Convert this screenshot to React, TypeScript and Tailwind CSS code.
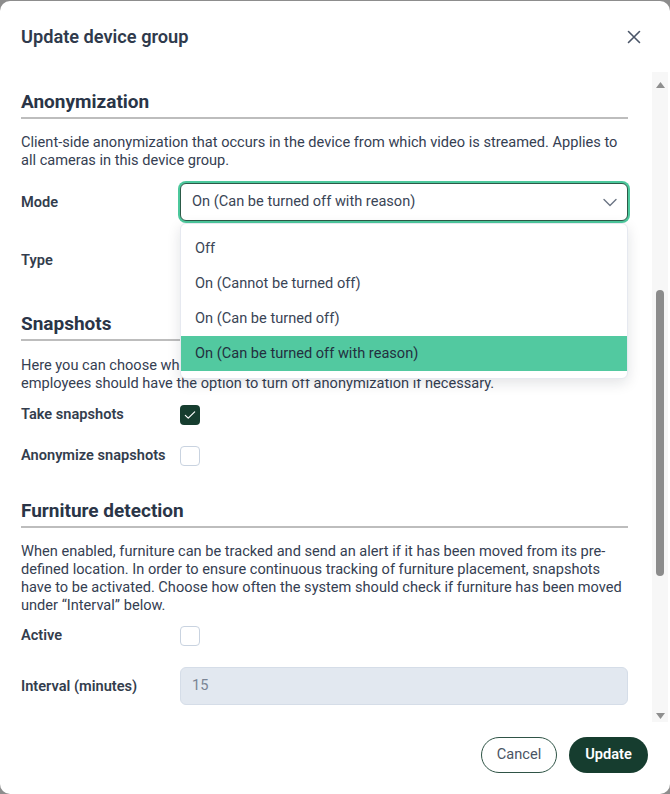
import { ReactNode } from "react";

const SECTION_TEXT = "text-[14.6px] leading-[18px] text-[#354052]";
const LABEL = "text-[14.6px] leading-[21px] font-semibold text-[#333d4d]";

const modeOptions = [
  "Off",
  "On (Cannot be turned off)",
  "On (Can be turned off)",
  "On (Can be turned off with reason)",
];

function SectionHeading({ children }: { children: ReactNode }) {
  return (
    <h3 className="text-[19px] leading-[24px] font-bold text-[#2a3547] pb-[3px] border-b-2 border-[#bdbdbd]">
      {children}
    </h3>
  );
}

function Checkbox({ checked }: { checked?: boolean }) {
  if (checked) {
    return (
      <div className="w-[20px] h-[20px] rounded-[4px] bg-[#163d2f] flex items-center justify-center">
        <svg width="14" height="14" viewBox="0 0 24 24" fill="none" stroke="white" strokeWidth="2" strokeLinecap="round" strokeLinejoin="round">
          <path d="M4 12.5l5 5L20 6.5" />
        </svg>
      </div>
    );
  }
  return <div className="w-[20px] h-[20px] rounded-[4px] border-[1.5px] border-[#c9d3e0] bg-white" />;
}

function Row({ label, children, className = "" }: { label: string; children: ReactNode; className?: string }) {
  return (
    <div className={`grid grid-cols-[159px_1fr] items-center ${className}`}>
      <span className={LABEL}>{label}</span>
      <div>{children}</div>
    </div>
  );
}

function ModeSelect() {
  return (
    <div className="relative">
      <div className="h-[38px] rounded-[6px] border border-[#2c5a48] ring-2 ring-[#4cc89c] flex items-center justify-between pl-[11px] pr-[9px] bg-white">
        <span className="text-[14.6px] text-[#3a4556]">On (Can be turned off with reason)</span>
        <svg width="16" height="16" viewBox="0 0 16 16" fill="none" stroke="#6b7584" strokeWidth="1.4" strokeLinecap="round" strokeLinejoin="round">
          <path d="M2 5.5l6 6 6-6" />
        </svg>
      </div>
      <ul className="absolute left-0 right-0 top-[40px] z-10 bg-white rounded-[6px] border border-[#e6e9f0] shadow-[0_4px_14px_rgba(15,23,42,0.12)] py-[7px]">
        {modeOptions.map((opt, i) => (
          <li
            key={opt}
            className={`h-[35px] flex items-center pl-[14px] text-[14.6px] text-[#3a4556] ${
              i === modeOptions.length - 1 ? "bg-[#52c9a0] text-[#23303f]" : ""
            }`}
          >
            {opt}
          </li>
        ))}
      </ul>
    </div>
  );
}

function Scrollbar() {
  return (
    <div className="w-[16px] mr-[2px] bg-[#f7f7f7] flex flex-col items-center">
      <svg width="9" height="6" viewBox="0 0 9 6" className="mt-[10px]">
        <path d="M4.5 0L9 6H0z" fill="#8f8f8f" />
      </svg>
      <div className="w-[8px] h-[286px] mt-[202px] rounded-full bg-[#8c8c8c]" />
      <div className="flex-1" />
      <svg width="9" height="6" viewBox="0 0 9 6" className="mb-[3px]">
        <path d="M0 0h9L4.5 6z" fill="#8f8f8f" />
      </svg>
    </div>
  );
}

export default function App() {
  return (
    <div className="min-h-screen bg-[#8d8d8d] pt-px font-['Roboto',sans-serif]">
      <div className="h-[793px] bg-white rounded-[10px] flex flex-col overflow-hidden">
        <header className="h-[71px] shrink-0 flex items-center justify-between pl-[21px] pr-[29px]">
          <h2 className="text-[18.2px] font-semibold text-[#2f3a4c]">Update device group</h2>
          <svg width="14" height="14" viewBox="0 0 14 14" fill="none" stroke="#4a5568" strokeWidth="1.6" strokeLinecap="round">
            <path d="M1.5 1.5l11 11M12.5 1.5l-11 11" />
          </svg>
        </header>

        <div className="flex flex-1 min-h-0">
          <div className="flex-1 pl-[21px] pr-[24px] pt-[18px] overflow-hidden">
            <SectionHeading>Anonymization</SectionHeading>
            <p className={`${SECTION_TEXT} mt-[14px]`}>
              Client-side anonymization that occurs in the device from which video is streamed. Applies to
              <br />
              all cameras in this device group.
            </p>
            <Row label="Mode" className="mt-[14px]">
              <ModeSelect />
            </Row>
            <Row label="Type" className="mt-[20px]">
              <div className="h-[38px] rounded-[6px] border border-[#cfd8e3] bg-white" />
            </Row>

            <div className="mt-[33px]">
              <SectionHeading>Snapshots</SectionHeading>
            </div>
            <p className={`${SECTION_TEXT} mt-[15px]`}>
              Here you can choose whether snapshots are taken and if they are anonymized. Note that
              <br />
              employees should have the option to turn off anonymization if necessary.
            </p>
            <Row label="Take snapshots" className="mt-[12px]">
              <Checkbox checked />
            </Row>
            <Row label="Anonymize snapshots" className="mt-[20px]">
              <Checkbox />
            </Row>

            <div className="mt-[33px]">
              <SectionHeading>Furniture detection</SectionHeading>
            </div>
            <p className={`${SECTION_TEXT} mt-[14px]`}>
              When enabled, furniture can be tracked and send an alert if it has been moved from its pre-
              <br />
              defined location. In order to ensure continuous tracking of furniture placement, snapshots
              <br />
              have to be activated. Choose how often the system should check if furniture has been moved
              <br />
              under “Interval” below.
            </p>
            <Row label="Active" className="mt-[11px]">
              <Checkbox />
            </Row>
            <Row label="Interval (minutes)" className="mt-[21px]">
              <div className="h-[38px] rounded-[6px] border border-[#d5dde8] bg-[#e2e8f0] flex items-center pl-[11px] text-[14.6px] text-[#7a8595]">
                15
              </div>
            </Row>
          </div>
          <Scrollbar />
        </div>

        <footer className="h-[72px] shrink-0 flex items-start justify-end gap-[12px] pr-[22px] pt-[15px]">
          <button className="h-[36px] w-[76px] rounded-full border border-[#2f5446] text-[14.6px] text-[#4a5464] bg-white">
            Cancel
          </button>
          <button className="h-[36px] w-[79px] rounded-full bg-[#163d2f] text-[14.6px] font-semibold text-white">
            Update
          </button>
        </footer>
      </div>
    </div>
  );
}
